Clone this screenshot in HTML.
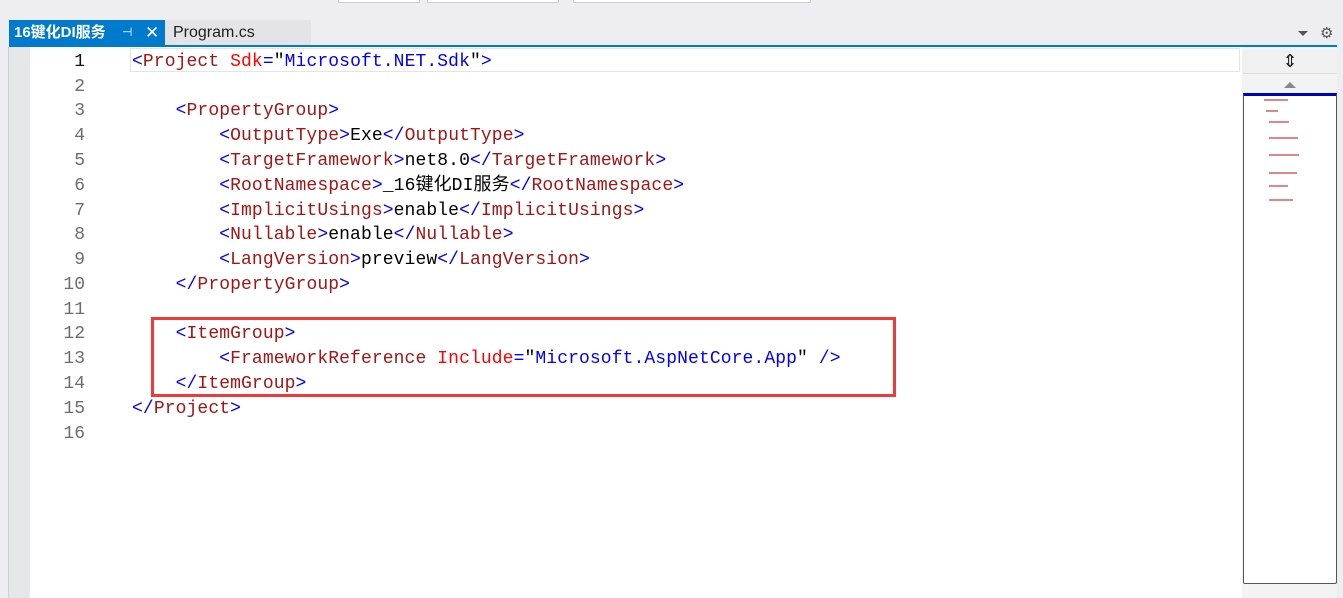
<!DOCTYPE html>
<html><head><meta charset="utf-8"><style>
body{margin:0;width:1343px;height:598px;background:#eeeef2;position:relative;overflow:hidden;font-family:"Liberation Sans","Noto Sans CJK SC",sans-serif}
.abs{position:absolute}
.code{font-family:"Liberation Mono","Noto Sans CJK SC",monospace;font-size:18px;letter-spacing:0.1px;white-space:pre;position:absolute;left:132px;height:25px;line-height:25px;margin-top:2px}
.ln{position:absolute;left:30px;width:55px;text-align:right;font-family:"Liberation Mono",monospace;font-size:18px;line-height:25px;color:#6d6d6d;margin-top:2px}
.b{color:#0000ff}.m{color:#a31515}.r{color:#ff0000}.k{color:#000}
</style></head><body>
<div class="abs" style="left:338px;top:-2px;width:80px;height:3px;background:#fff;border:1px solid #ccc"></div>
<div class="abs" style="left:427px;top:-2px;width:130px;height:3px;background:#fff;border:1px solid #ccc"></div>
<div class="abs" style="left:573px;top:-2px;width:236px;height:3px;background:#fff;border:1px solid #ccc"></div>
<div class="abs" style="left:9px;top:20px;width:156px;height:25px;background:#007acc;color:#fff;font-weight:bold;font-size:15px;line-height:25px"><span style="padding-left:5px">16键化DI服务</span><span style="position:absolute;left:113px;font-weight:normal;font-size:12px">⊣</span><span style="position:absolute;left:136px;font-weight:normal;font-size:17px">✕</span></div>
<div class="abs" style="left:165px;top:20px;width:146px;height:25px;background:#e4e4e8;color:#1e1e1e;font-size:16px;line-height:25px"><span style="padding-left:8px">Program.cs</span></div>
<div class="abs" style="left:1298px;top:31px;width:0;height:0;border-left:5px solid transparent;border-right:5px solid transparent;border-top:5px solid #555"></div>
<div class="abs" style="left:1320px;top:24px;font-size:15px;color:#555">⚙</div>
<div class="abs" style="left:9px;top:45px;width:1328px;height:2px;background:#007acc"></div>
<div class="abs" style="left:8px;top:47px;width:1px;height:551px;background:#cfd0d4"></div>
<div class="abs" style="left:9px;top:47px;width:21px;height:551px;background:#e6e7e8"></div>
<div class="abs" style="left:30px;top:47px;width:1212px;height:551px;background:#fff"></div>
<div class="abs" style="left:130px;top:48px;width:1108px;height:22px;border:1px solid #e4e4e4"></div>
<div class="abs" style="left:1242px;top:47px;width:95px;height:551px;background:#f3f3f3"></div>
<div class="abs" style="left:1243px;top:50px;width:94px;height:23px;background:#f0f0f0;border-bottom:1px solid #ddd;text-align:center;font-size:18px;line-height:23px;color:#222">⇕</div>
<div class="abs" style="left:1284px;top:82px;width:0;height:0;border-left:6px solid transparent;border-right:6px solid transparent;border-bottom:6px solid #888"></div>
<div class="abs" style="left:1243px;top:93px;width:92px;height:487px;background:#fff;border:1px solid #555;border-top:3px solid #0000c0;border-radius:0 0 2px 2px"></div>
<div class="abs" style="left:1264px;top:99px;width:24px;height:2px;background:#d88"></div>
<div class="abs" style="left:1266px;top:110px;width:12px;height:2px;background:#d88"></div>
<div class="abs" style="left:1269px;top:121px;width:20px;height:2px;background:#d88"></div>
<div class="abs" style="left:1269px;top:137px;width:29px;height:2px;background:#d88"></div>
<div class="abs" style="left:1269px;top:154px;width:30px;height:2px;background:#d88"></div>
<div class="abs" style="left:1269px;top:172px;width:28px;height:2px;background:#d88"></div>
<div class="abs" style="left:1269px;top:185px;width:19px;height:2px;background:#d88"></div>
<div class="abs" style="left:1269px;top:199px;width:24px;height:2px;background:#d88"></div>

<div class="ln" style="top:48px;color:#111">1</div>
<div class="ln" style="top:73px">2</div>
<div class="ln" style="top:97px">3</div>
<div class="ln" style="top:122px">4</div>
<div class="ln" style="top:147px">5</div>
<div class="ln" style="top:172px">6</div>
<div class="ln" style="top:197px">7</div>
<div class="ln" style="top:221px">8</div>
<div class="ln" style="top:246px">9</div>
<div class="ln" style="top:271px">10</div>
<div class="ln" style="top:296px">11</div>
<div class="ln" style="top:320px">12</div>
<div class="ln" style="top:345px">13</div>
<div class="ln" style="top:370px">14</div>
<div class="ln" style="top:395px">15</div>
<div class="ln" style="top:420px">16</div>

<div class="code" style="top:48px"><span class="b">&lt;</span><span class="m">Project</span> <span class="r">Sdk</span><span class="b">=</span><span class="k">"</span><span class="b">Microsoft.NET.Sdk</span><span class="k">"</span><span class="b">&gt;</span></div>
<div class="code" style="top:97px">    <span class="b">&lt;</span><span class="m">PropertyGroup</span><span class="b">&gt;</span></div>
<div class="code" style="top:122px">        <span class="b">&lt;</span><span class="m">OutputType</span><span class="b">&gt;</span>Exe<span class="b">&lt;/</span><span class="m">OutputType</span><span class="b">&gt;</span></div>
<div class="code" style="top:147px">        <span class="b">&lt;</span><span class="m">TargetFramework</span><span class="b">&gt;</span>net8.0<span class="b">&lt;/</span><span class="m">TargetFramework</span><span class="b">&gt;</span></div>
<div class="code" style="top:172px">        <span class="b">&lt;</span><span class="m">RootNamespace</span><span class="b">&gt;</span>_16键化DI服务<span class="b">&lt;/</span><span class="m">RootNamespace</span><span class="b">&gt;</span></div>
<div class="code" style="top:197px">        <span class="b">&lt;</span><span class="m">ImplicitUsings</span><span class="b">&gt;</span>enable<span class="b">&lt;/</span><span class="m">ImplicitUsings</span><span class="b">&gt;</span></div>
<div class="code" style="top:221px">        <span class="b">&lt;</span><span class="m">Nullable</span><span class="b">&gt;</span>enable<span class="b">&lt;/</span><span class="m">Nullable</span><span class="b">&gt;</span></div>
<div class="code" style="top:246px">        <span class="b">&lt;</span><span class="m">LangVersion</span><span class="b">&gt;</span>preview<span class="b">&lt;/</span><span class="m">LangVersion</span><span class="b">&gt;</span></div>
<div class="code" style="top:271px">    <span class="b">&lt;/</span><span class="m">PropertyGroup</span><span class="b">&gt;</span></div>
<div class="code" style="top:320px">    <span class="b">&lt;</span><span class="m">ItemGroup</span><span class="b">&gt;</span></div>
<div class="code" style="top:345px">        <span class="b">&lt;</span><span class="m">FrameworkReference</span> <span class="r">Include</span><span class="b">=</span><span class="k">"</span><span class="b">Microsoft.AspNetCore.App</span><span class="k">"</span> <span class="b">/&gt;</span></div>
<div class="code" style="top:370px">    <span class="b">&lt;/</span><span class="m">ItemGroup</span><span class="b">&gt;</span></div>
<div class="code" style="top:395px"><span class="b">&lt;/</span><span class="m">Project</span><span class="b">&gt;</span></div>

<div class="abs" style="left:151px;top:317px;width:739px;height:74px;border:3px solid #f03a3a"></div>
</body></html>
